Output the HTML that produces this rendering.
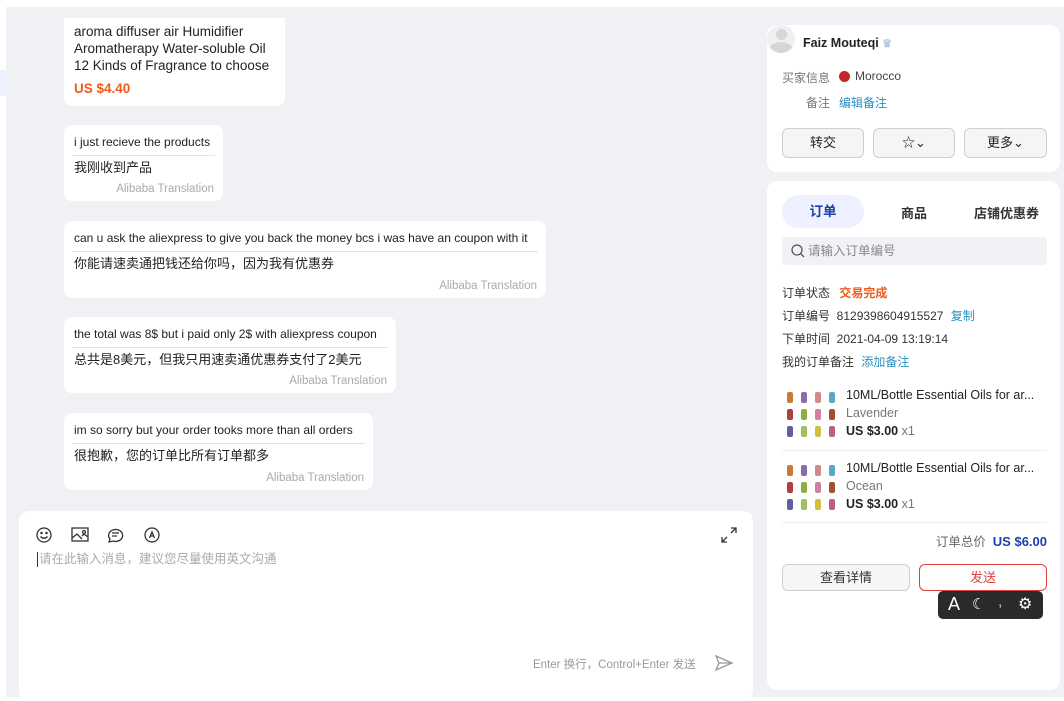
<!DOCTYPE html>
<html><head><meta charset="utf-8"><style>
*{box-sizing:border-box;margin:0;padding:0}
body{width:1064px;height:697px;overflow:hidden;background:#fff;font-family:"Liberation Sans","Noto Sans CJK SC",sans-serif;position:relative;color:#222}
.bg{position:absolute;left:6px;top:7px;width:1058px;height:690px;background:#eff1f4}
.b{position:absolute;background:#fff;border-radius:8px;font-size:12px;color:#222}
.b .en{padding:9px 10px 0 10px;height:30px;line-height:16px;white-space:nowrap}
.b .zh{margin:0 8px;border-top:1px solid #e3e3e3;padding:2px 2px 0;line-height:20px;font-size:13px;white-space:nowrap}
.b .tr{position:absolute;right:9px;bottom:6px;color:#aaa;font-size:11.5px}
.card{position:absolute;background:#fff;border-radius:10px}
.lbl{position:absolute;font-size:12px;color:#555}
.btn{position:absolute;border:1px solid #cfcfcf;border-radius:6px;background:#f5f5f5;font-size:13px;text-align:center;line-height:28px}
.row{position:absolute;left:782px;font-size:12px;color:#333}
.thumb{position:absolute;width:52px;height:48px;display:grid;grid-template-columns:repeat(4,1fr);gap:3px 4px}
.thumb i{display:block;width:6px;height:11px;border-radius:2px;margin:auto}
.pt{position:absolute;left:846px;font-size:12.5px;line-height:18px;color:#222}
</style></head><body>
<div class="bg"></div>
<div style="position:absolute;left:0;top:70px;width:6px;height:26px;background:#eef0ff"></div>

<div class="b" style="left:64px;top:18px;width:221px;height:88px;border-radius:0 0 8px 8px;font-size:13.5px">
<div style="padding:5px 10px;line-height:17px">aroma diffuser air Humidifier Aromatherapy Water-soluble Oil 12 Kinds of Fragrance to choose</div>
<div style="padding:0 10px;color:#f05a1a;font-weight:bold;font-size:13.5px;margin-top:2px">US $4.40</div></div>

<div class="b" style="left:64px;top:125px;width:159px;height:76px"><div class="en">i just recieve the products</div><div class="zh">我刚收到产品</div><div class="tr">Alibaba Translation</div></div>
<div class="b" style="left:64px;top:221px;width:482px;height:77px"><div class="en">can u ask the aliexpress to give you back the money bcs i was have an coupon with it</div><div class="zh">你能请速卖通把钱还给你吗，因为我有优惠券</div><div class="tr">Alibaba Translation</div></div>
<div class="b" style="left:64px;top:317px;width:332px;height:76px"><div class="en">the total was 8$ but i paid only 2$ with aliexpress coupon</div><div class="zh">总共是8美元，但我只用速卖通优惠券支付了2美元</div><div class="tr">Alibaba Translation</div></div>
<div class="b" style="left:64px;top:413px;width:309px;height:77px"><div class="en">im so sorry but your order tooks more than all orders</div><div class="zh">很抱歉，您的订单比所有订单都多</div><div class="tr">Alibaba Translation</div></div>

<div class="card" style="left:19px;top:511px;width:734px;height:190px">
<svg style="position:absolute;left:17px;top:15px" width="130" height="20" fill="none" stroke="#333" stroke-width="1.3">
<circle cx="8" cy="9" r="7"/><circle cx="5.5" cy="7" r=".6" fill="#333"/><circle cx="10.5" cy="7" r=".6" fill="#333"/><path d="M4.5 10.5q3.5 3.5 7 0"/>
<rect x="36" y="2" width="16" height="13"/><path d="M36 12l5-4 5 5M46 10l2-2 4 3"/><circle cx="48" cy="6" r="1.5"/>
<path d="M73 16l1-3a7 6 0 1 1 3 2z"/><path d="M76 7h7M76 10h5"/>
<circle cx="116" cy="9" r="7"/><path d="M113.5 12l2.5-6 2.5 6M114.5 10h3"/>
</svg>
<svg style="position:absolute;left:702px;top:16px" width="16" height="16" fill="none" stroke="#333" stroke-width="1.3"><path d="M10 1h5v5M15 1l-5 5M6 15H1v-5M1 15l5-5"/></svg>
<div style="position:absolute;left:18px;top:41px;font-size:12.5px;color:#aaa;border-left:1px solid #333;padding-left:1px;line-height:15px">请在此输入消息，建议您尽量使用英文沟通</div>
<div style="position:absolute;left:514px;top:145px;font-size:11.5px;color:#999">Enter 换行，Control+Enter 发送</div>
<svg style="position:absolute;left:695px;top:143px" width="20" height="18" fill="none" stroke="#999" stroke-width="1.3"><path d="M2 2l16 7-16 7 3-7z M5 9h13"/></svg>
</div>

<div class="card" style="left:767px;top:25px;width:293px;height:147px">
<div style="position:absolute;left:0;top:0;width:28px;height:28px;border-radius:50%;background:#f0f0f0;overflow:hidden"><div style="position:absolute;left:9px;top:4px;width:11px;height:11px;border-radius:50%;background:#d6d6d6"></div><div style="position:absolute;left:2px;top:17px;width:24px;height:16px;border-radius:50%;background:#d6d6d6"></div></div>
<div style="position:absolute;left:36px;top:11px;font-size:12.5px;font-weight:bold">Faiz Mouteqi <span style="color:#b8c8d8;font-size:11px">♛</span></div>
<div class="lbl" style="left:15px;top:44px;color:#777">买家信息</div>
<div style="position:absolute;left:72px;top:46px;width:11px;height:11px;border-radius:50%;background:#c1272d"></div>
<div class="lbl" style="left:88px;top:44px;color:#444">Morocco</div>
<div class="lbl" style="left:39px;top:69px;color:#777">备注</div>
<div class="lbl" style="left:72px;top:69px;color:#2b8fc0">编辑备注</div>
<div class="btn" style="left:15px;top:103px;width:82px;height:30px">转交</div>
<div class="btn" style="left:106px;top:103px;width:82px;height:30px">☆⌄</div>
<div class="btn" style="left:197px;top:103px;width:83px;height:30px">更多⌄</div>
</div>

<div class="card" style="left:767px;top:181px;width:293px;height:509px">
<div style="position:absolute;left:15px;top:14px;width:82px;height:33px;border-radius:17px;background:#eef1ff;color:#1a3fb0;font-size:13.5px;text-align:center;line-height:33px;font-weight:bold">订单</div>
<div style="position:absolute;left:134px;top:22px;font-size:13px;font-weight:bold;color:#333">商品</div>
<div style="position:absolute;left:207px;top:22px;font-size:13px;font-weight:bold;color:#333">店铺优惠券</div>
<div style="position:absolute;left:15px;top:56px;width:265px;height:28px;border-radius:4px;background:#f0f2f5;font-size:12.5px;color:#888;line-height:28px;padding-left:26px">请输入订单编号</div>
<svg style="position:absolute;left:24px;top:63px" width="14" height="14" fill="none" stroke="#555" stroke-width="1.3"><circle cx="6" cy="6" r="5"/><path d="M10 10l3 3"/></svg>
</div>
<div class="row" style="top:284px">订单状态 <span style="color:#f05a1a;font-weight:bold;margin-left:6px">交易完成</span></div>
<div class="row" style="top:307px">订单编号 &nbsp;8129398604915527 <span style="color:#2b8fc0;margin-left:4px">复制</span></div>
<div class="row" style="top:330px">下单时间 &nbsp;2021-04-09 13:19:14</div>
<div class="row" style="top:353px">我的订单备注 <span style="color:#2b8fc0;margin-left:4px">添加备注</span></div>

<div class="thumb" style="left:785px;top:390px"><i style="background:#c87a3a"></i><i style="background:#8a6cae"></i><i style="background:#d08a8a"></i><i style="background:#5aa8c8"></i><i style="background:#b04040"></i><i style="background:#8cb040"></i><i style="background:#d080a0"></i><i style="background:#a05030"></i><i style="background:#6060a0"></i><i style="background:#a0c060"></i><i style="background:#d0c040"></i><i style="background:#c06080"></i></div>
<div class="pt" style="top:386px">10ML/Bottle Essential Oils for ar...<br><span style="color:#777">Lavender</span><br><b>US $3.00</b> <span style="color:#777">x1</span></div>
<div style="position:absolute;left:782px;top:450px;width:265px;height:1px;background:#eee"></div>
<div class="thumb" style="left:785px;top:463px"><i style="background:#c87a3a"></i><i style="background:#8a6cae"></i><i style="background:#d08a8a"></i><i style="background:#5aa8c8"></i><i style="background:#b04040"></i><i style="background:#8cb040"></i><i style="background:#d080a0"></i><i style="background:#a05030"></i><i style="background:#6060a0"></i><i style="background:#a0c060"></i><i style="background:#d0c040"></i><i style="background:#c06080"></i></div>
<div class="pt" style="top:459px">10ML/Bottle Essential Oils for ar...<br><span style="color:#777">Ocean</span><br><b>US $3.00</b> <span style="color:#777">x1</span></div>
<div style="position:absolute;left:782px;top:522px;width:265px;height:1px;background:#eee"></div>
<div style="position:absolute;right:17px;top:531px;font-size:12.5px;color:#666">订单总价 &nbsp;<b style="color:#1a3fb0;font-size:13px">US $6.00</b></div>
<div class="btn" style="left:782px;top:564px;width:128px;height:27px;line-height:25px;background:#f5f6f8;color:#333">查看详情</div>
<div class="btn" style="left:919px;top:564px;width:128px;height:27px;line-height:25px;background:#fff;border-color:#e04040;color:#e04040">发送</div>
<div style="position:absolute;left:938px;top:591px;width:105px;height:28px;background:#2a2a2a;border-radius:5px;color:#fff">
<span style="position:absolute;left:10px;top:3px;font-size:18px">A</span>
<span style="position:absolute;left:34px;top:4px;font-size:15px">☾</span>
<span style="position:absolute;left:60px;top:2px;font-size:16px;color:#bbb">,</span>
<span style="position:absolute;left:80px;top:3px;font-size:16px">⚙</span></div>
</body></html>
